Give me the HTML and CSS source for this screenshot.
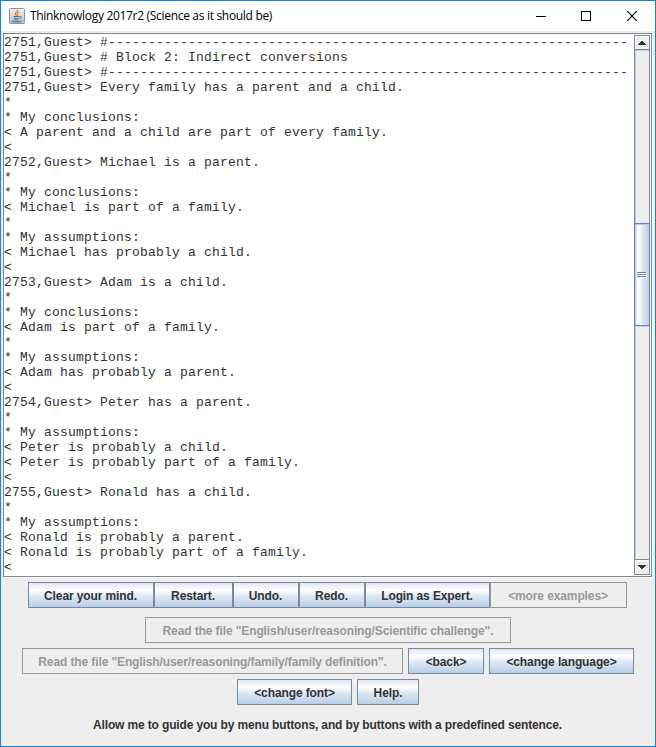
FILE: index.html
```
<!DOCTYPE html>
<html lang="en">
<head>
<meta charset="utf-8">
<title>Thinknowlogy 2017r2 (Science as it should be)</title>
<link rel="stylesheet" href="styles.css">
</head>
<body>
<div class="window">
  <header class="titlebar">
    <svg class="java" width="16" height="16" viewBox="0 0 16 16">
      <defs><linearGradient id="tile" x1="0" y1="0" x2="0" y2="1"><stop offset="0" stop-color="#f2f2f2"/><stop offset=".5" stop-color="#d6dbdf"/><stop offset="1" stop-color="#a9b4bd"/></linearGradient></defs>
      <rect x=".5" y=".5" width="15" height="15" rx="1" fill="url(#tile)" stroke="#8396a5"/>
      <path d="M8.7 1.6C9.2 3.5 5.6 4.2 6.3 5.8c.2.6.9 1.1 1 1.8M10.4 4C8.6 4.8 7.8 5.5 8.4 6.5c.2.4.1.8-.3 1.1" fill="none" stroke="#e8822c" stroke-width="1.3"/>
      <path d="M4.5 8.5h6M5 10.3h5M5.3 12h4.2M10.8 8.4c2.2-.5 2.1 1.6-.3 2.2M3 13.2c2.5 1 7 1 9.5-.2" fill="none" stroke="#47749b" stroke-width="1"/>
    </svg>
    <h1 class="title">Thinknowlogy 2017r2 (Science as it should be)</h1>
    <svg class="controls" width="104" height="12" viewBox="0 0 104 12" fill="none" stroke="#000">
      <path d="M0 6.5h10M45.5 1.5h9v9h-9z" shape-rendering="crispEdges"/>
      <path d="M91.2 1.2l9.6 9.6M100.8 1.2l-9.6 9.6" stroke-width="1.1"/>
    </svg>
  </header>
  <main class="console">
<pre class="log">2751,Guest&gt; #-----------------------------------------------------------------
2751,Guest&gt; # Block 2: Indirect conversions
2751,Guest&gt; #-----------------------------------------------------------------
2751,Guest&gt; Every family has a parent and a child.
*
* My conclusions:
&lt; A parent and a child are part of every family.
&lt;
2752,Guest&gt; Michael is a parent.
*
* My conclusions:
&lt; Michael is part of a family.
*
* My assumptions:
&lt; Michael has probably a child.
&lt;
2753,Guest&gt; Adam is a child.
*
* My conclusions:
&lt; Adam is part of a family.
*
* My assumptions:
&lt; Adam has probably a parent.
&lt;
2754,Guest&gt; Peter has a parent.
*
* My assumptions:
&lt; Peter is probably a child.
&lt; Peter is probably part of a family.
&lt;
2755,Guest&gt; Ronald has a child.
*
* My assumptions:
&lt; Ronald is probably a parent.
&lt; Ronald is probably part of a family.
&lt;</pre>
    <div class="scrollbar">
      <div class="arrow up"><svg width="8" height="4" viewBox="0 0 8 4" shape-rendering="crispEdges"><path d="M3 0h2v1h1v1h1v1h1v1H0V3h1V2h1V1h1z" fill="#333"/></svg></div>
      <div class="track before"></div>
      <div class="thumb"><svg width="10" height="6" viewBox="0 0 10 6" shape-rendering="crispEdges"><path d="M1 1.5h9M1 3.5h9M1 5.5h9" stroke="#fff"/><path d="M0 .5h9M0 2.5h9M0 4.5h9" stroke="#6382bf"/></svg></div>
      <div class="track after"></div>
      <div class="arrow down"><svg width="8" height="4" viewBox="0 0 8 4" shape-rendering="crispEdges"><path d="M0 0h8v1H7v1H6v1H5v1H3V3H2V2H1V1H0z" fill="#333"/></svg></div>
    </div>
  </main>
  <section class="panel">
    <div class="row joined">
      <button class="btn w126">Clear your mind.</button><button class="btn w79">Restart.</button><button class="btn w66">Undo.</button><button class="btn w66">Redo.</button><button class="btn w125">Login as Expert.</button><button class="btn w137" disabled>&lt;more examples&gt;</button>
    </div>
    <div class="row">
      <button class="btn w366" disabled>Read the file "English/user/reasoning/Scientific challenge".</button>
    </div>
    <div class="row">
      <button class="btn w381" disabled>Read the file "English/user/reasoning/family/family definition".</button>
      <button class="btn w76">&lt;back&gt;</button>
      <button class="btn w145">&lt;change language&gt;</button>
    </div>
    <div class="row">
      <button class="btn w115">&lt;change font&gt;</button>
      <button class="btn w62">Help.</button>
    </div>
    <p class="hint">Allow me to guide you by menu buttons, and by buttons with a predefined sentence.</p>
  </section>
</div>
</body>
</html>
```
FILE: styles.css
```
* { box-sizing: border-box; }
body { margin: 0; overflow: hidden; }
.window {
  width: 656px; height: 747px;
  border: 1px solid #1883d7;
  background: #eee;
  display: flex; flex-direction: column;
}
.titlebar {
  height: 30px; flex: none;
  background: #fff;
  display: flex; align-items: center;
  padding: 0 15px 0 8px;
}
.java { flex: none; }
.title {
  margin: 0 0 0 5px; flex: 1;
  font: 400 12px/16px "Open Sans", sans-serif;
  letter-spacing: -0.31px;
  color: #000; white-space: nowrap;
}
.controls { flex: none; }
.console {
  height: 544px; flex: none;
  margin: 2px 3px 0 2px;
  display: flex;
  background: #fff;
  border: 1px solid #7a8a99;
  box-shadow: 1px 1px 0 #fff;
}
.log {
  margin: 0; padding: 1px 0 0;
  flex: 1; overflow: hidden;
  font: 13px/15px "Liberation Mono", monospace;
  letter-spacing: 0.199px;
  color: #333;
}
.scrollbar {
  width: 17px; flex: none;
  margin: 1px 0;
  display: flex; flex-direction: column;
  border-right: 1px solid #fff;
}
.arrow {
  height: 16px; flex: none;
  display: flex; align-items: center; justify-content: center;
  background: #eee;
  border: 1px solid #7a8a99;
  box-shadow: inset 1px 1px 0 #fff;
}
.up { height: 15px; }
.track {
  background: #eee;
  border: solid #7a8a99; border-width: 0 1px;
  box-shadow: inset 1px 1px 0 #b8cfe5;
}
.before { height: 173px; flex: none; }
.after { flex: 1; }
.thumb {
  height: 103px; flex: none;
  display: flex; align-items: center; justify-content: center;
  border: 1px solid #6382bf;
  background: linear-gradient(to right, #dde8f3 0, #fff 30%, #dde8f3 55%, #b8cfe5 100%);
  box-shadow: inset 1px 1px 0 #b8cfe5;
}
.panel {
  padding-top: 5px;
  display: flex; flex-direction: column; gap: 5px;
}
.row { display: flex; justify-content: center; gap: 5px; }
.joined { gap: 0; margin: 0 2px 4px 0; }
.btn {
  height: 26px; padding: 1px 0 0; flex: none;
  border: 1px solid #7a8a99; border-radius: 0;
  background: linear-gradient(to bottom, #dde8f3 0, #fff 30%, #dde8f3 55%, #b8cfe5 100%);
  font: bold 12px/16px "Liberation Sans", Arial, sans-serif;
  letter-spacing: -0.11px;
  color: #333; white-space: nowrap;
}
.btn:disabled { background: #eee; border-color: #999; color: #999; }
.w62 { width: 62px; }
.w66 { width: 66px; }
.w76 { width: 76px; }
.w79 { width: 79px; }
.w115 { width: 115px; }
.w125 { width: 125px; }
.w126 { width: 126px; }
.w137 { width: 137px; }
.w145 { width: 145px; }
.w366 { width: 366px; }
.w381 { width: 381px; }
.hint {
  margin: 7px 1px 0 0;
  text-align: center;
  font: bold 12px/16px "Liberation Sans", Arial, sans-serif;
  letter-spacing: -0.145px;
  color: #333;
}
```
